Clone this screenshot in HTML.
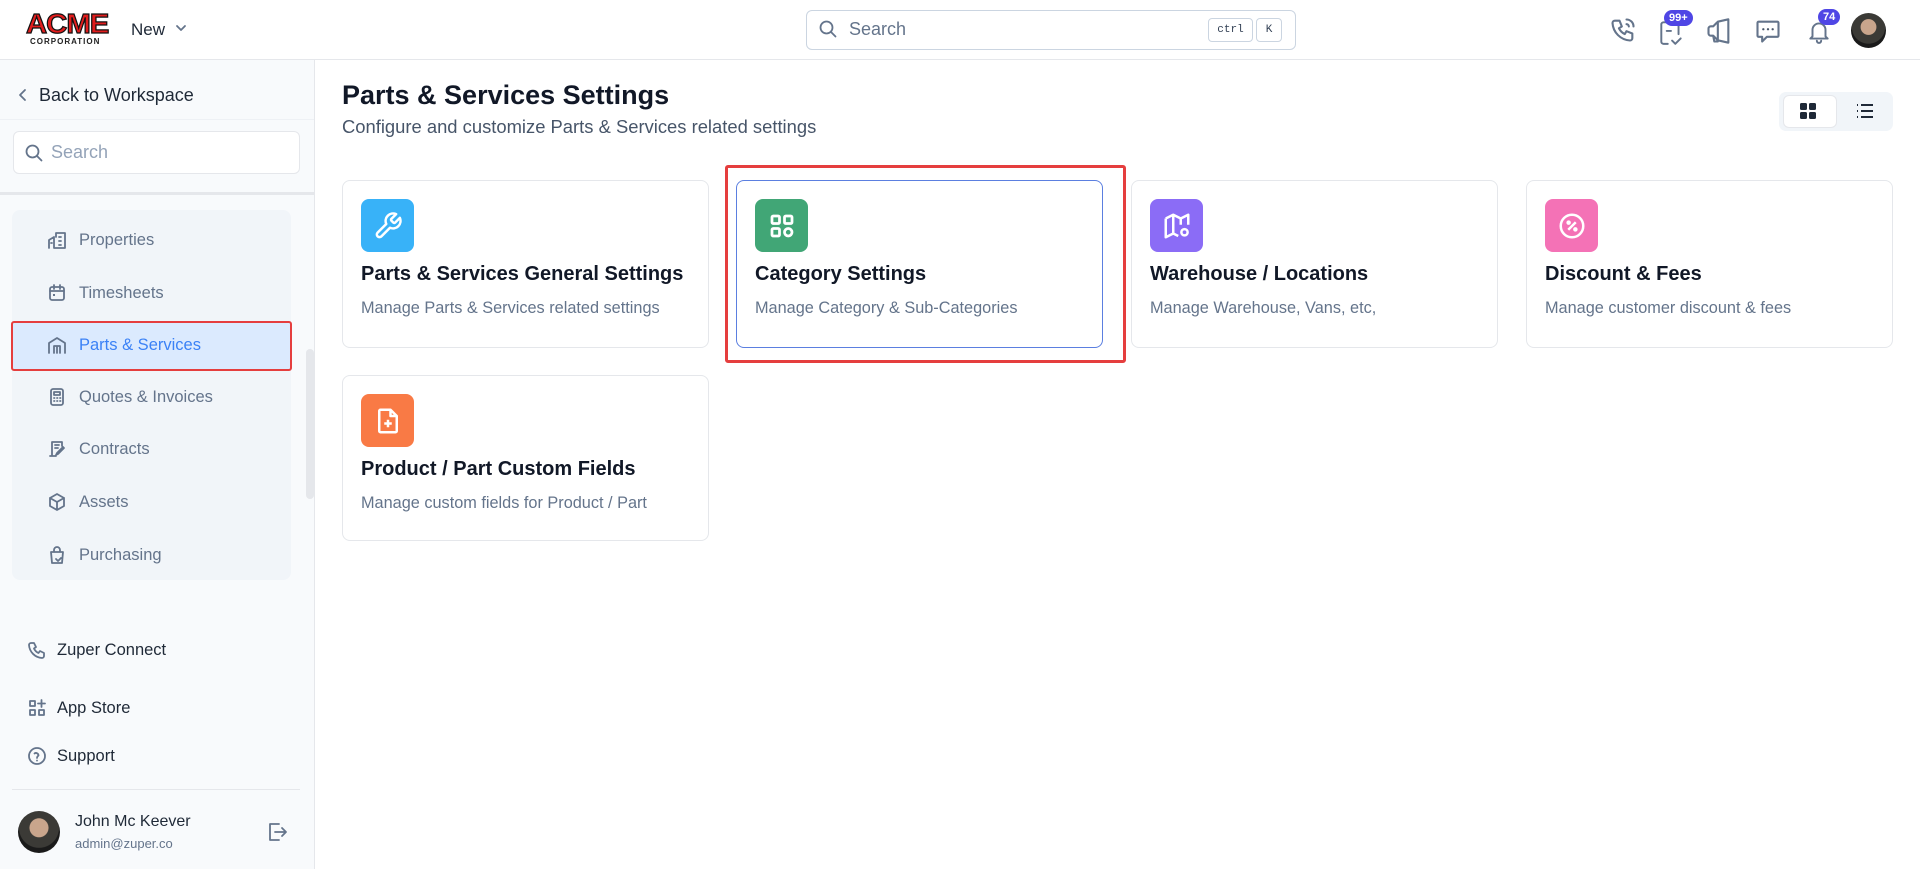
<!DOCTYPE html>
<html><head><meta charset="utf-8"><style>
*{box-sizing:border-box;margin:0;padding:0}
body{width:1920px;height:869px;overflow:hidden;background:#fff;font-family:"Liberation Sans",sans-serif;color:#1f2937;position:relative}
.a{position:absolute}
.hdr{left:0;top:0;width:1920px;height:60px;border-bottom:1px solid #e5e7eb;background:#fff}
.side{left:0;top:60px;width:315px;height:809px;background:#f8fafc;border-right:1px solid #e5e7eb}
.ico{fill:none;stroke:#64748b;stroke-width:1.8;stroke-linecap:round;stroke-linejoin:round}
.item{position:absolute;left:47px;font-size:16.5px;color:#64748b;display:flex;align-items:center;gap:12px}
.card{position:absolute;width:367px;border:1px solid #e5e7eb;border-radius:8px;background:#fff}
.card .ib{position:absolute;left:18px;top:18px;width:53px;height:53px;border-radius:8px;display:flex;align-items:center;justify-content:center}
.card .t{position:absolute;left:18px;top:82px;font-size:20px;font-weight:bold;color:#111827}
.card .d{position:absolute;left:18px;top:118px;font-size:16.3px;color:#64748b}
.badge{position:absolute;background:#4f46e5;color:#fff;font-size:11px;font-weight:bold;border-radius:9px;padding:2px 5px}
</style></head><body>
<div class="a hdr"></div>
<div class="a" style="left:26px;top:10px;font-weight:900;font-size:28px;color:#e11d1d;letter-spacing:-1px;line-height:28px;-webkit-text-stroke:1.2px #111;transform:scaleX(1.05);transform-origin:left">ACME</div>
<div class="a" style="left:30px;top:37px;font-size:8px;font-weight:bold;color:#222;letter-spacing:1px">CORPORATION</div>
<div class="a" style="left:131px;top:20px;font-size:17px;color:#1f2937">New</div>
<svg class="a" style="left:175px;top:22px" width="12" height="12" viewBox="0 0 12 12"><path d="M2 4l4 4 4-4" class="ico" stroke="#1f2937"/></svg>
<div class="a" style="left:806px;top:10px;width:490px;height:40px;border:1px solid #cbd5e1;border-radius:6px"></div>
<svg class="a" style="left:818px;top:19px" width="20" height="20" viewBox="0 0 20 20"><circle cx="8.5" cy="8.5" r="6" class="ico"/><path d="M13 13l4.5 4.5" class="ico"/></svg>
<div class="a" style="left:849px;top:19px;font-size:18px;color:#64748b">Search</div>
<div class="a" style="left:1208px;top:18px;width:45px;height:24px;border:1px solid #cbd5e1;border-radius:4px;font-family:'Liberation Mono',monospace;font-size:11px;color:#334155;text-align:center;line-height:22px">ctrl</div>
<div class="a" style="left:1256px;top:18px;width:26px;height:24px;border:1px solid #cbd5e1;border-radius:4px;font-family:'Liberation Mono',monospace;font-size:11px;color:#334155;text-align:center;line-height:22px">K</div>
<svg class="a" style="left:1609px;top:16px" width="28" height="28" viewBox="0 0 24 24"><path class="ico" stroke="#475569" stroke-width="2" d="M5 4h4l2 5-2.5 1.5a11 11 0 005 5L15 13l5 2v4a2 2 0 01-2 2A16 16 0 013 6a2 2 0 012-2M15 3a6 6 0 016 6M15 7a2 2 0 012 2"/></svg>
<svg class="a" style="left:1658px;top:18px" width="26" height="28" viewBox="0 0 24 26"><path class="ico" stroke="#475569" stroke-width="2" d="M9 24H5a2 2 0 01-2-2V6a2 2 0 012-2h12a2 2 0 012 2v9M8 12h4M13 21l3 3 5-5"/></svg>
<div class="badge" style="left:1664px;top:10px">99+</div>
<svg class="a" style="left:1705px;top:17px" width="28" height="28" viewBox="0 0 24 24"><path class="ico" stroke="#475569" stroke-width="2" d="M3 10v4a2 2 0 002 2h2l4 4V4L7 8H5a2 2 0 00-2 2zM11 4l9-2v20l-9-2M7 16l1 5h3"/></svg>
<svg class="a" style="left:1754px;top:17px" width="28" height="28" viewBox="0 0 24 24"><path class="ico" stroke="#475569" stroke-width="2" d="M4 4h16a1 1 0 011 1v11a1 1 0 01-1 1h-9l-4 4v-4H4a1 1 0 01-1-1V5a1 1 0 011-1z"/><circle cx="8" cy="10.5" r="1" fill="#475569"/><circle cx="12" cy="10.5" r="1" fill="#475569"/><circle cx="16" cy="10.5" r="1" fill="#475569"/></svg>
<svg class="a" style="left:1806px;top:17px" width="26" height="28" viewBox="0 0 24 24"><path class="ico" stroke="#475569" stroke-width="2" d="M6 17V11a6 6 0 0112 0v6l2 2H4l2-2zM10 21a2 2 0 004 0"/></svg>
<div class="badge" style="left:1818px;top:9px">74</div>
<div class="a" style="left:1851px;top:13px;width:35px;height:35px;border-radius:50%;background:radial-gradient(circle at 50% 40%,#c9a58c 0 28%,#3b3a36 30% 60%,#1a1a1a 62%)"></div>
<div class="a side"></div>
<svg class="a" style="left:16px;top:88px" width="14" height="14" viewBox="0 0 14 14"><path d="M9 2L4 7l5 5" class="ico" stroke="#1f2937" stroke-width="2"/></svg>
<div class="a" style="left:39px;top:85px;font-size:18px;color:#1f2937">Back to Workspace</div>
<div class="a" style="left:0;top:119px;width:314px;height:1px;background:#eef1f5"></div>
<div class="a" style="left:13px;top:131px;width:287px;height:43px;background:#fff;border:1px solid #e5e7eb;border-radius:6px"></div>
<svg class="a" style="left:24px;top:143px" width="20" height="20" viewBox="0 0 20 20"><circle cx="8.5" cy="8.5" r="6" class="ico" stroke="#94a3b8"/><path d="M13 13l4.5 4.5" class="ico" stroke="#94a3b8"/></svg>
<div class="a" style="left:51px;top:142px;font-size:18px;color:#94a3b8">Search</div>
<div class="a" style="left:0;top:192px;width:314px;height:3px;background:#e5e7eb"></div>
<div class="a" style="left:12px;top:210px;width:279px;height:370px;background:#f1f5f9;border-radius:8px"></div>
<div class="a" style="left:11px;top:321px;width:281px;height:50px;background:#dbeafe;border:2px solid #e53e3e;border-radius:3px"></div>
<div class="a" style="left:306px;top:349px;width:8px;height:150px;background:#e5e7eb;border-radius:4px"></div>
<div class="item" style="top:230px"><svg width="20" height="20" viewBox="0 0 20 20"><path class="ico" d="M2 18V10l5-3v11M7 18h11V3H9v4M12 7h2M12 11h2M12 15h2M4 13h1"/></svg>Properties</div>
<div class="item" style="top:283px"><svg width="20" height="20" viewBox="0 0 20 20"><rect x="3" y="4" width="14" height="13" rx="2" class="ico"/><path class="ico" d="M3 8h14M7 2v4M13 2v4"/><rect x="6" y="11" width="2" height="2" fill="#64748b"/></svg>Timesheets</div>
<div class="item" style="top:335px;color:#3b82f6"><svg width="20" height="20" viewBox="0 0 20 20"><path class="ico" stroke="#3b82f6" d="M2 18V8l8-5 8 5v10M7 18v-7h6v7M10 11v7"/></svg>Parts &amp; Services</div>
<div class="item" style="top:387px"><svg width="20" height="20" viewBox="0 0 20 20"><rect x="4" y="2" width="12" height="16" rx="2" class="ico"/><path class="ico" d="M7 5h6v3H7zM7 11h.5M10 11h.5M13 11h.5M7 14h.5M10 14h.5M13 14h.5"/></svg>Quotes &amp; Invoices</div>
<div class="item" style="top:439px"><svg width="20" height="20" viewBox="0 0 20 20"><path class="ico" d="M15 7V3H5v14M8 6h4M8 9h3M3 17h6M17 9l-6 6-2 1 1-2 6-6z"/></svg>Contracts</div>
<div class="item" style="top:492px"><svg width="20" height="20" viewBox="0 0 20 20"><path class="ico" d="M10 2l7 4v8l-7 4-7-4V6zM3 6l7 4 7-4M10 10v8"/></svg>Assets</div>
<div class="item" style="top:545px"><svg width="20" height="20" viewBox="0 0 20 20"><path class="ico" d="M4 7h12l-1 11H5zM7 7V5a3 3 0 016 0v2M9 14l2 2 3-3"/></svg>Purchasing</div>
<div class="item" style="left:27px;top:640px;color:#1f2937;gap:10px"><svg width="20" height="20" viewBox="0 0 20 20"><path class="ico" stroke="#1f2937" d="M4 3h3l2 4-2 1.5a9 9 0 004.5 4.5L13 11l4 2v3a2 2 0 01-2 2A14 14 0 012 5a2 2 0 012-2"/></svg>Zuper Connect</div>
<div class="item" style="left:27px;top:698px;color:#1f2937;gap:10px"><svg width="20" height="20" viewBox="0 0 20 20"><path class="ico" stroke="#1f2937" d="M3 3h5v5H3zM3 12h5v5H3zM12 12h5v5h-5zM14.5 2v7M11 5.5h7"/></svg>App Store</div>
<div class="item" style="left:27px;top:746px;color:#1f2937;gap:10px"><svg width="20" height="20" viewBox="0 0 20 20"><circle cx="10" cy="10" r="8" class="ico" stroke="#1f2937"/><path class="ico" stroke="#1f2937" d="M7.5 7.5a2.5 2.5 0 014 2c-1 1-1.5 1-1.5 2.5M10 14.5v.1"/></svg>Support</div>
<div class="a" style="left:12px;top:789px;width:288px;height:1px;background:#e5e7eb"></div>
<div class="a" style="left:18px;top:811px;width:42px;height:42px;border-radius:50%;background:radial-gradient(circle at 50% 40%,#c9a58c 0 28%,#3b3a36 30% 60%,#1a1a1a 62%)"></div>
<div class="a" style="left:75px;top:813px;font-size:16px;color:#1f2937">John Mc Keever</div>
<div class="a" style="left:75px;top:836px;font-size:13px;color:#64748b">admin@zuper.co</div>
<svg class="a" style="left:265px;top:820px" width="24" height="24" viewBox="0 0 24 24"><path class="ico" stroke="#64748b" d="M14 4H5v16h9M10 12h11M17 8l4 4-4 4"/></svg>
<div class="a" style="left:342px;top:80px;font-size:27px;font-weight:bold;color:#111827">Parts &amp; Services Settings</div>
<div class="a" style="left:342px;top:116px;font-size:18.4px;color:#475569">Configure and customize Parts &amp; Services related settings</div>
<div class="a" style="left:1779px;top:92px;width:114px;height:39px;background:#f1f5f9;border-radius:7px"></div>
<div class="a" style="left:1783px;top:95px;width:54px;height:33px;background:#fff;border-radius:6px;border:1px solid #e5e7eb"></div>
<svg class="a" style="left:1800px;top:103px" width="17" height="17" viewBox="0 0 17 17" fill="#1f2937"><rect x="0" y="0" width="7" height="7" rx="1.5"/><rect x="9" y="0" width="7" height="7" rx="1.5"/><rect x="0" y="9" width="7" height="7" rx="1.5"/><rect x="9" y="9" width="7" height="7" rx="1.5"/></svg>
<svg class="a" style="left:1856px;top:103px" width="18" height="16" viewBox="0 0 18 16"><path d="M1 2h1M5 2h12M1 8h1M5 8h12M1 14h1M5 14h12" stroke="#1f2937" stroke-width="2"/></svg>
<div class="a" style="left:725px;top:165px;width:401px;height:198px;border:3px solid #e53e3e;border-radius:3px"></div>
<div class="card" style="left:342px;top:180px;height:168px"><div class="ib" style="background:#38b2f8"><svg width="30" height="30" viewBox="0 0 24 24"><path d="M14.7 6.3a1 1 0 000 1.4l1.6 1.6a1 1 0 001.4 0l3.8-3.8a6 6 0 01-7.9 7.9l-6.9 6.9a2.1 2.1 0 01-3-3l6.9-6.9a6 6 0 017.9-7.9z" fill="none" stroke="#fff" stroke-width="2" stroke-linejoin="round"/></svg></div><div class="t">Parts &amp; Services General Settings</div><div class="d">Manage Parts &amp; Services related settings</div></div>
<div class="card" style="left:736px;top:180px;height:168px;border-color:#5b7fe0"><div class="ib" style="background:#41a676"><svg width="30" height="30" viewBox="0 0 24 24" fill="none" stroke="#fff" stroke-width="2.2"><rect x="4" y="4" width="6" height="6" rx="1"/><rect x="14" y="4" width="6" height="6" rx="1"/><rect x="4" y="14" width="6" height="6" rx="1"/><circle cx="17" cy="17" r="3"/></svg></div><div class="t">Category Settings</div><div class="d">Manage Category &amp; Sub-Categories</div></div>
<div class="card" style="left:1131px;top:180px;height:168px"><div class="ib" style="background:#8b6cf6"><svg width="30" height="30" viewBox="0 0 24 24" fill="none" stroke="#fff" stroke-width="2" stroke-linejoin="round"><path d="M3 6l6-3 6 3 6-3v8M3 6v15l6-3 4 2M9 3v15M15 6v5"/><circle cx="18" cy="17" r="2.5"/></svg></div><div class="t">Warehouse / Locations</div><div class="d">Manage Warehouse, Vans, etc,</div></div>
<div class="card" style="left:1526px;top:180px;height:168px"><div class="ib" style="background:#f472b6"><svg width="30" height="30" viewBox="0 0 24 24" fill="none" stroke="#fff" stroke-width="2"><circle cx="12" cy="12" r="9"/><path d="M9 15l6-6"/><circle cx="9.3" cy="9.3" r=".8" fill="#fff"/><circle cx="14.7" cy="14.7" r=".8" fill="#fff"/></svg></div><div class="t">Discount &amp; Fees</div><div class="d">Manage customer discount &amp; fees</div></div>
<div class="card" style="left:342px;top:375px;height:166px"><div class="ib" style="background:#f97a45"><svg width="30" height="30" viewBox="0 0 24 24" fill="none" stroke="#fff" stroke-width="2" stroke-linejoin="round"><path d="M14 3H6a1 1 0 00-1 1v16a1 1 0 001 1h12a1 1 0 001-1V8zM14 3v5h5M12 11v6M9 14h6"/></svg></div><div class="t">Product / Part Custom Fields</div><div class="d">Manage custom fields for Product / Part</div></div>
</body></html>
